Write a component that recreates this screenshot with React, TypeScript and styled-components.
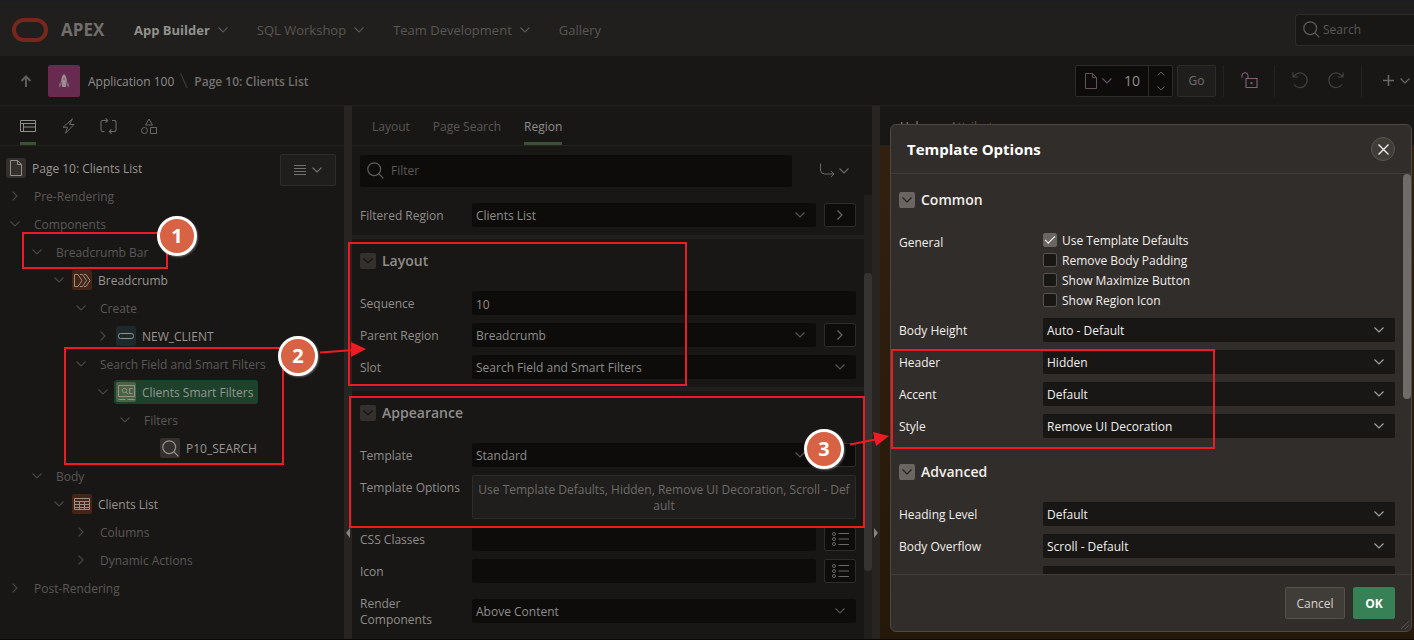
import React from 'react';
import styled, { createGlobalStyle, css } from 'styled-components';

const color = {
  page: '#181715',
  header: '#201f1d',
  line: '#242220',
  splitter: '#272422',
  input: '#0d0c0b',
  button: '#1f1e1c',
  border: '#2e2c2a',
  text: '#8f8d8a',
  muted: '#5b5855',
  dialog: '#312d2a',
  dialogLine: '#403c39',
  dialogInput: '#181715',
  dialogText: '#f1efed',
  red: '#ed1c24',
};

const Global = createGlobalStyle`
  *, *::before, *::after { box-sizing: border-box; }
  body {
    margin: 0;
    background: ${color.page};
    color: ${color.text};
    font: 12px/16px "Open Sans", "Noto Sans", sans-serif;
  }
  button, input, select { font: inherit; color: inherit; margin: 0; }
  button { padding: 0; background: none; border: 0; cursor: pointer; }
  a { color: inherit; text-decoration: none; }
  h1, h2, ul { margin: 0; padding: 0; font: inherit; }
  svg { display: block; flex: none; }
`;

/* ---------- icons ---------- */

type IconProps = { w?: number; h?: number; box?: string; sw?: number; children: React.ReactNode };
const Icon = ({ w = 16, h = w, box = `0 0 ${w} ${h}`, sw = 1, children }: IconProps) => (
  <svg width={w} height={h} viewBox={box} fill="none" stroke="currentColor" strokeWidth={sw} aria-hidden="true">
    {children}
  </svg>
);

const Down = () => <Icon w={10} h={6} sw={1.2}><path d="M.5.5 5 5 9.5.5" /></Icon>;
const Up = () => <Icon w={8} h={5}><path d="M.5 4.5 4 1l3.5 3.5" /></Icon>;
const SmallDown = () => <Icon w={8} h={5}><path d="M.5.5 4 4 7.5.5" /></Icon>;
const Right = () => <Icon w={6} h={10} sw={1.2}><path d="M.5.5 5 5 .5 9.5" /></Icon>;
const Magnifier = () => (
  <Icon w={17} sw={1.2}><circle cx="7.2" cy="7.2" r="6.4" /><path d="m12 12 4.4 4.4" /></Icon>
);
const PageIcon = () => <Icon w={12} h={16}><path d="M.5.5h7l4 4v11H.5zM7.5.5v4h4" /></Icon>;
const ArrowUp = () => <Icon w={12} h={12} sw={2}><path d="M6 12V1.5M1.5 6 6 1.5 10.5 6" /></Icon>;
const Rocket = () => (
  <Icon w={12} h={16}>
    <path d="M6 1C3.8 3 3.2 5.5 3.2 8.5L4.2 14h3.6l1-5.5C8.800 5.500 8.200 3 6 1z" fill="currentColor" stroke="none" />
    <path d="M2.6 8.5 1 11v3.5l2-1.500zM9.400 8.500 11 11v3.500L9 13z" fill="currentColor" stroke="none" opacity=".6" />
    <path d="M4.800 6h2.400" stroke="#672b50" opacity=".6" />
  </Icon>
);
const LayoutIcon = () => <Icon w={16} h={12}><path d="M.5.5h15v11H.5zM.5 3.500h15M3.500 3.500v8M3.500 7h12" /></Icon>;
const Bolt = () => <Icon w={13} h={16}><path d="M10.500.8 1 9.300h4.500L3.500 15.200 12 6.500H7.500z" strokeLinejoin="round" /></Icon>;
const Cycle = () => (
  <Icon w={17} h={16} sw={1.1}>
    <path d="M4.500 13.500H2.500a1.500 1.500 0 0 1-1.500-1.500V4a1.500 1.500 0 0 1 1.500-1.500h5M5.500.3l2.200 2.200-2.200 2.200" />
    <path d="M12 2.500h2.500A1.500 1.500 0 0 1 16 4v8a1.500 1.500 0 0 1-1.500 1.500H9.500M11.500 11.300 9.300 13.500l2.200 2.200" />
  </Icon>
);
const Shapes = () => (
  <Icon w={16} h={16}><path d="M8 1 4.500 7h7zM9.500 9.500h6v6h-6z" /><circle cx="3.500" cy="12.500" r="3" /></Icon>
);
const MenuLines = () => <Icon w={12} h={10}><path d="M0 .5h12M0 3.500h12M0 6.500h12M0 9.500h12" /></Icon>;
const BreadcrumbIcon = () => (
  <Icon w={17} h={13}><path d="M.5.5h3.500l4 6-4 6H.5zM6 .5h2.500l4 6-4 6H6M10 .5h2l4 6-4 6h-2" /></Icon>
);
const ButtonIcon = () => <Icon w={16} h={6}><rect x=".5" y=".5" width="15" height="5" rx="2" /></Icon>;
const FilterIcon = () => (
  <Icon w={17} h={17}>
    <path d="M.5 12.500V1.500h16v11zM.5 15.500h7M9.500 15.500h7M8.200 8.200 10.200 10.200M14.500 4.500h-3v5h3" />
    <circle cx="6.500" cy="6.500" r="2.200" />
  </Icon>
);
const TableIcon = () => <Icon w={16} h={12}><path d="M.5.5h15v11H.5zM.5 3.500h15M.5 6.500h15M.5 9.500h15M5.500 3.500v8M10.500 3.500v8" /></Icon>;
const GoTo = () => <Icon w={15} h={15}><path d="M.5.500v6.500a4 4 0 0 0 4 4H14M10.800 8 14 11l-3.200 3.200" /></Icon>;
const ListIcon = () => (
  <Icon w={17} h={14}>
    <path d="M6.500 1.500H17M6.500 7H17M6.500 12.500H17" /><circle cx="2" cy="2" r="1.500" /><circle cx="2" cy="7" r="1.500" /><circle cx="2" cy="12" r="1.500" />
  </Icon>
);
const Unlock = () => (
  <Icon w={17} h={17} sw={1.1}>
    <path d="M5 6.500h11v9H5zM1 5.500V3.800a3 3 0 0 1 6 0V6.500" />
    <path d="M9.500 10.200h2v2h-2z" fill="currentColor" stroke="none" />
  </Icon>
);
const Undo = () => <Icon w={17} h={17} sw={1.2}><path d="M1 .5v4.500h5M1.500 4.800A7.300 7.300 0 1 1 2 12.500" /></Icon>;
const Redo = () => <Icon w={17} h={17} sw={1.2}><path d="M16 .5v4.500h-5M15.500 4.800A7.300 7.300 0 1 0 15 12.500" /></Icon>;
const Plus = () => <Icon w={11} h={11} sw={1.5}><path d="M5.500 0v11M0 5.500h11" /></Icon>;
const Close = () => <Icon w={11} h={11} sw={1.4}><path d="m.5.5 10 10M10.500.5l-10 10" /></Icon>;
const Grip = () => <Icon w={8} h={8}><path d="M0 8 8 0M4 8l4-4" /></Icon>;
const Slash = () => <Icon w={8} h={15} sw={1.2}><path d="M.5 0 7 15" /></Icon>;
const Logo = () => <Icon w={36} h={24} sw={4}><rect x="2" y="2" width="32" height="20" rx="10" /></Icon>;

/* ---------- shell ---------- */

const Shell = styled.div`
  position: relative;
  display: flex;
  flex-direction: column;
  min-height: 100vh;
  overflow: hidden;
  border-bottom: 1px solid #0a0908;
`;
const Header = styled.header`
  display: flex;
  align-items: center;
  height: 56px;
  padding: 2px 0 0 12px;
  border-top: 1px solid #1a1d24;
  background: ${color.header};
`;
const Brand = styled.a`
  display: flex;
  align-items: center;
  gap: 13px;
  width: 122px;
  font-size: 17px;
  font-weight: 700;
  line-height: 24px;
  color: #716e6c;
  svg { color: #78271d; }
`;
const Nav = styled.nav`
  display: flex;
  flex: 1;
  gap: 29px;
  font-size: 13px;
`;
const NavLink = styled.a<{ $active?: boolean }>`
  display: flex;
  align-items: center;
  gap: 8px;
  color: ${p => (p.$active ? '#93918e' : '#595653')};
  font-weight: ${p => (p.$active ? 700 : 400)};
  svg { color: #595653; }
`;
const HeaderSearch = styled.label`
  display: flex;
  align-items: center;
  gap: 3px;
  width: 119px;
  height: 32px;
  padding-left: 7px;
  border: 1px solid ${color.border};
  border-right: 0;
  border-radius: 4px 0 0 4px;
  background: ${color.page};
  color: #5f5c59;
`;
const BareInput = styled.input`
  flex: 1;
  min-width: 0;
  padding: 1px 0 0;
  border: 0;
  outline: 0;
  background: none;
  &::placeholder { color: ${color.muted}; opacity: 1; }
`;

const Toolbar = styled.div`
  display: flex;
  align-items: center;
  justify-content: space-between;
  height: 50px;
  padding: 0 4px 0 20px;
  border-bottom: 1px solid ${color.line};
`;
const Crumbs = styled.nav`
  display: flex;
  align-items: center;
  > svg { margin: 0 6px; color: #3d3a38; }
`;
const CrumbLink = styled.a`
  padding: 2px 0 0 8px;
`;
const CrumbCurrent = styled.b`
  padding-top: 2px;
  font-weight: 600;
  color: #73706e;
`;
const UpLink = styled.a`
  width: 28px;
  color: #5f5c59;
`;
const AppTile = styled.span`
  display: grid;
  place-items: center;
  width: 32px;
  height: 32px;
  border-radius: 2px;
  background: #672b50;
  color: #9a8d94;
`;
const Tools = styled.div`
  display: flex;
  align-items: center;
  height: 32px;
`;
const PageSelector = styled.div`
  display: flex;
  align-items: center;
  width: 98px;
  height: 32px;
  margin-right: 4px;
  border: 1px solid ${color.border};
  border-radius: 2px;
  background: ${color.input};
  font-size: 14px;
`;
const PageMenu = styled.button`
  display: flex;
  align-items: center;
  gap: 5px;
  padding-left: 9px;
  color: #66525f;
`;
const Spinner = styled.div`
  display: flex;
  flex-direction: column;
  align-items: center;
  justify-content: space-around;
  width: 24px;
  height: 30px;
  border-left: 1px solid ${color.border};
  color: #5f5c59;
  button { display: flex; }
`;
const NumberInput = styled(BareInput)`
  text-align: right;
  padding-right: 8px;
`;
const PlainButton = styled.button<{ $w: number }>`
  display: flex;
  align-items: center;
  justify-content: center;
  gap: 6px;
  width: ${p => p.$w}px;
  height: 32px;
  border: 1px solid ${color.border};
  border-radius: 2px;
  background: ${color.button};
  color: #73706d;
`;
const ToolGroup = styled.div<{ $w: number }>`
  display: flex;
  align-items: center;
  justify-content: center;
  gap: 18px;
  width: ${p => p.$w}px;
  height: 32px;
  border-left: 1px solid ${color.line};
  color: #454240;
  button + & { margin-left: 7px; }
`;
const ToolButton = styled.button<{ $tint?: string; $gap?: number }>`
  display: flex;
  align-items: center;
  gap: ${p => p.$gap ?? 4}px;
  color: ${p => p.$tint ?? 'inherit'};
`;
const CreateGroup = styled(ToolGroup)`
  justify-content: flex-end;
`;

const Workspace = styled.main`
  flex: 1;
  display: grid;
  grid-template-columns: 344px 8px minmax(0, 520px) 8px minmax(0, 1fr);
`;
const Splitter = styled.div<{ $dir: 'left' | 'right' }>`
  display: flex;
  justify-content: center;
  padding-top: 422px;
  background: ${color.splitter};
  &::after {
    content: '';
    height: 10px;
    border: 5px solid transparent;
    border-width: 5px 4px;
    border-${p => (p.$dir === 'left' ? 'right' : 'left')}-color: #85827f;
    border-${p => p.$dir}-width: 0;
  }
`;
const Panel = styled.section`
  display: flex;
  flex-direction: column;
  min-width: 0;
`;
const Tabs = styled.div<{ $gap: number }>`
  display: flex;
  gap: ${p => p.$gap}px;
  height: 40px;
  padding-left: 20px;
  border-bottom: 1px solid ${color.line};
`;
const Tab = styled.button<{ $on?: boolean; $icon?: boolean }>`
  display: flex;
  align-items: center;
  justify-content: center;
  min-width: 16px;
  padding-top: ${p => (p.$icon ? 3 : 5)}px;
  border-bottom: 3px solid ${p => (p.$on ? '#3a5134' : 'transparent')};
  color: ${p => (p.$on ? color.text : p.$icon ? '#6b6865' : color.muted)};
`;

/* ---------- tree ---------- */

const TreeArea = styled.div`
  display: flex;
  align-items: flex-start;
  padding: 8px 8px 0 0;
`;
const Tree = styled.ul`
  flex: 1;
  list-style: none;
`;
const TreeRow = styled.li<{ $level: number }>`
  display: flex;
  align-items: center;
  height: 28px;
  padding-left: ${p => p.$level * 22}px;
`;
const Toggle = styled.button`
  display: flex;
  justify-content: center;
  width: 30px;
  color: #484542;
`;
const Node = styled.span<{ $selected?: boolean; $icon?: boolean; $root?: boolean }>`
  display: flex;
  align-items: center;
  gap: 6px;
  height: 24px;
  color: ${p => (p.$icon ? '#989592' : color.muted)};
  margin-left: ${p => (p.$root ? 6 : p.$icon ? -4 : 2)}px;
  padding: 0 5px 0 ${p => (p.$root ? 0 : 2)}px;
  border-radius: 3px;
  background: ${p => (p.$selected ? '#1d412b' : 'none')};
`;
const NodeText = styled.span`
  padding-top: 2px;
`;
const NodeIcon = styled.span<{ $bg: string }>`
  display: grid;
  place-items: center;
  width: 20px;
  height: 20px;
  border-radius: 2px;
  background: ${p => p.$bg};
  color: #989088;
`;

type TreeItem = { level: number; label: string; open?: boolean; icon?: React.ReactNode; bg?: string; selected?: boolean };
const treeItems: TreeItem[] = [
  { level: 0, label: 'Pre-Rendering', open: false },
  { level: 0, label: 'Components', open: true },
  { level: 1, label: 'Breadcrumb Bar', open: true },
  { level: 2, label: 'Breadcrumb', open: true, icon: <BreadcrumbIcon />, bg: '#442414' },
  { level: 3, label: 'Create', open: true },
  { level: 4, label: 'NEW_CLIENT', open: false, icon: <ButtonIcon />, bg: '#1c292d' },
  { level: 3, label: 'Search Field and Smart Filters', open: true },
  { level: 4, label: 'Clients Smart Filters', open: true, icon: <FilterIcon />, bg: '#4b6344', selected: true },
  { level: 5, label: 'Filters', open: true },
  { level: 6, label: 'P10_SEARCH', icon: <Magnifier />, bg: '#33302e' },
  { level: 1, label: 'Body', open: true },
  { level: 2, label: 'Clients List', open: true, icon: <TableIcon />, bg: '#442414' },
  { level: 3, label: 'Columns', open: false },
  { level: 3, label: 'Dynamic Actions', open: false },
  { level: 0, label: 'Post-Rendering', open: false },
];

/* ---------- property editor ---------- */

const FilterRow = styled.div`
  display: flex;
  align-items: center;
  height: 49px;
  padding: 0 23px 0 8px;
`;
const FilterBox = styled.label`
  display: flex;
  align-items: center;
  gap: 7px;
  flex: 1;
  height: 32px;
  margin-right: 28px;
  padding-left: 7px;
  border-radius: 2px;
  background: ${color.input};
  color: #5f5c59;
`;
const ScrollBody = styled.div`
  flex: 1;
  display: flex;
`;
const Properties = styled.div`
  flex: 1;
  min-width: 0;
`;
const Track = styled.div`
  width: 8px;
  padding-top: 78px;
  background: #201f1d;
`;
const Thumb = styled.div<{ $h: number; $color: string }>`
  width: 8px;
  height: ${p => p.$h}px;
  border-radius: 4px;
  background: ${p => p.$color};
`;
const Group = styled.section<{ $dialog?: boolean }>`
  border-top: 4px solid ${p => (p.$dialog ? 'transparent' : '#201f1d')};
`;
const GroupTitle = styled.h2<{ $dialog?: boolean }>`
  display: flex;
  align-items: center;
  gap: 6px;
  height: 44px;
  padding-left: 8px;
  font-size: 14px;
  font-weight: 600;
  button {
    display: grid;
    place-items: center;
    width: 16px;
    height: 16px;
    border-radius: 2px;
    background: ${p => (p.$dialog ? '#6b6561' : '#33302e')};
    color: ${p => (p.$dialog ? '#24211f' : '#141311')};
  }
`;
const Rows = styled.div`
  display: grid;
  gap: 8px;
  padding: 8px;
`;
const Row = styled.div<{ $dialog?: boolean; $center?: boolean }>`
  display: grid;
  grid-template-columns: ${p => (p.$dialog ? 144 : 112)}px minmax(0, 1fr) auto;
  align-items: ${p => (p.$center ? 'center' : 'start')};
  > label, > span { padding: 5px 0 3px; }
`;
const fieldBox = css`
  width: 100%;
  height: 24px;
  padding: 2px 4px 0;
  border: 0;
  outline: 0;
  border-radius: 2px;
`;
const SelectWrap = styled.div<{ $dialog?: boolean }>`
  display: grid;
  align-items: center;
  select {
    ${fieldBox}
    grid-area: 1 / 1;
    appearance: none;
    background: ${p => (p.$dialog ? color.dialogInput : color.input)};
  }
  svg {
    grid-area: 1 / 1;
    justify-self: end;
    margin-right: 11px;
    color: ${p => (p.$dialog ? '#a5a19e' : '#56534f')};
    pointer-events: none;
  }
`;
const TextField = styled.input`
  ${fieldBox}
  background: ${color.input};
`;
const SideButton = styled.button`
  display: grid;
  place-items: center;
  width: 32px;
  height: 24px;
  margin-left: 8px;
  border: 1px solid ${color.border};
  border-radius: 2px;
  background: ${color.input};
  color: #6b6866;
`;
const OptionsButton = styled.button`
  height: 44px;
  padding: 2px 4px 0;
  border: 1px solid ${color.border};
  border-radius: 2px;
  background: ${color.button};
  color: #6e6b69;
  word-break: break-all;
`;

type FieldProps = { id: string; label: string; value: string; dialog?: boolean; side?: React.ReactNode; center?: boolean };
const SelectField = ({ id, label, value, dialog, side, center }: FieldProps) => (
  <Row $dialog={dialog} $center={center}>
    <label htmlFor={id}>{label}</label>
    <SelectWrap $dialog={dialog}>
      <select id={id} defaultValue={value}><option>{value}</option></select>
      <Down />
    </SelectWrap>
    {side}
  </Row>
);
const Goto = () => <SideButton aria-label="Go to"><Right /></SideButton>;
const Pick = () => <SideButton aria-label="Pick from list"><ListIcon /></SideButton>;

/* ---------- right side & dialog ---------- */

const Canvas = styled.div`
  flex: 1;
  background: linear-gradient(#32200f, #251809);
`;
const Dialog = styled.div`
  position: absolute;
  top: 124px;
  right: 2px;
  width: 522px;
  height: 508px;
  display: flex;
  flex-direction: column;
  border: 1px solid #4d4844;
  border-radius: 6px;
  background: ${color.dialog};
  color: ${color.dialogText};
`;
const DialogHeader = styled.div`
  display: flex;
  align-items: center;
  justify-content: space-between;
  height: 49px;
  padding: 0 16px;
  border-bottom: 1px solid ${color.dialogLine};
  h1 { font-size: 15px; line-height: 24px; font-weight: 700; color: #fff; }
  button {
    display: grid;
    place-items: center;
    width: 24px;
    height: 24px;
    border: 1px solid #5a5550;
    border-radius: 12px;
    background: #403c38;
  }
`;
const DialogBody = styled.div`
  flex: 1;
  min-height: 0;
  display: flex;
  overflow: hidden;
`;
const DialogFooter = styled.div`
  display: flex;
  align-items: center;
  justify-content: flex-end;
  gap: 8px;
  height: 57px;
  padding-right: 16px;
  border-top: 1px solid ${color.dialogLine};
`;
const DialogButton = styled.button<{ $hot?: boolean }>`
  width: ${p => (p.$hot ? 42 : 60)}px;
  height: 32px;
  padding-top: 2px;
  border: 1px solid ${p => (p.$hot ? '#388056' : '#55504c')};
  border-radius: 2px;
  background: ${p => (p.$hot ? '#388056' : '#403c38')};
  color: ${p => (p.$hot ? '#fff' : '#d6d3d0')};
  font-weight: ${p => (p.$hot ? 700 : 400)};
`;
const Resize = styled.span`
  position: absolute;
  right: 2px;
  bottom: 2px;
  color: #5a5550;
`;
const CheckLabel = styled.label`
  display: flex;
  align-items: center;
  gap: 5px;
  height: 20px;
  span { padding-top: 2px; }
`;
const CheckBox = styled.input`
  appearance: none;
  display: grid;
  place-items: center;
  width: 14px;
  height: 14px;
  border: 1px solid #57524e;
  border-radius: 2px;
  background: ${color.dialogInput};
  &:checked { background: #6b6561; border-color: #6b6561; }
  &:checked::after {
    content: '';
    width: 10px;
    height: 5px;
    margin-top: -3px;
    border: solid #fff;
    border-width: 0 0 1px 1px;
    transform: rotate(-45deg);
  }
`;
const checks = [
  { label: 'Use Template Defaults', on: true },
  { label: 'Remove Body Padding', on: false },
  { label: 'Show Maximize Button', on: false },
  { label: 'Show Region Icon', on: false },
];

/* ---------- annotations ---------- */

const Frame = styled.div<{ $x: number; $y: number; $w: number; $h: number }>`
  position: absolute;
  left: ${p => p.$x}px;
  top: ${p => p.$y}px;
  width: ${p => p.$w}px;
  height: ${p => p.$h}px;
  border: 2px solid ${color.red};
  pointer-events: none;
`;
const Badge = styled.div<{ $x: number; $y: number }>`
  position: absolute;
  left: ${p => p.$x - 20}px;
  top: ${p => p.$y - 20}px;
  display: grid;
  place-items: center;
  width: 40px;
  height: 40px;
  border: 3px solid #fff;
  border-radius: 20px;
  background: #d86344;
  box-shadow: 1px 1px 2px rgba(255, 255, 255, 0.35);
  color: #fff;
  font: 700 20px/24px "Open Sans", sans-serif;
`;
const Arrow = styled.svg<{ $x: number; $y: number }>`
  position: absolute;
  left: ${p => p.$x}px;
  top: ${p => p.$y}px;
  fill: ${color.red};
  stroke: ${color.red};
`;

export default function App() {
  return (
    <Shell>
      <Global />
      <Header>
        <Brand href="#"><Logo />APEX</Brand>
        <Nav>
          <NavLink href="#" $active>App Builder<Down /></NavLink>
          <NavLink href="#">SQL Workshop<Down /></NavLink>
          <NavLink href="#">Team Development<Down /></NavLink>
          <NavLink href="#">Gallery</NavLink>
        </Nav>
        <HeaderSearch><Magnifier /><BareInput aria-label="Search" placeholder="Search" /></HeaderSearch>
      </Header>

      <Toolbar>
        <Crumbs>
          <UpLink href="#" aria-label="Up"><ArrowUp /></UpLink>
          <AppTile><Rocket /></AppTile>
          <CrumbLink href="#">Application 100</CrumbLink>
          <Slash />
          <CrumbCurrent>Page 10: Clients List</CrumbCurrent>
        </Crumbs>
        <Tools>
          <PageSelector>
            <PageMenu aria-label="Pages"><PageIcon /><Down /></PageMenu>
            <NumberInput aria-label="Page number" defaultValue="10" />
            <Spinner>
              <button aria-label="Next page"><Up /></button>
              <button aria-label="Previous page"><SmallDown /></button>
            </Spinner>
          </PageSelector>
          <PlainButton $w={39}>Go</PlainButton>
          <ToolGroup $w={51}>
            <ToolButton $tint="#85607e" aria-label="Unlock"><Unlock /></ToolButton>
          </ToolGroup>
          <ToolGroup $w={87}>
            <ToolButton aria-label="Undo"><Undo /></ToolButton>
            <ToolButton aria-label="Redo"><Redo /></ToolButton>
          </ToolGroup>
          <CreateGroup $w={49}>
            <ToolButton $tint="#6b6866" $gap={6} aria-label="Create"><Plus /><Down /></ToolButton>
          </CreateGroup>
        </Tools>
      </Toolbar>

      <Workspace>
        <Panel>
          <Tabs $gap={24}>
            <Tab $icon $on aria-label="Rendering"><LayoutIcon /></Tab>
            <Tab $icon aria-label="Dynamic Actions"><Bolt /></Tab>
            <Tab $icon aria-label="Processing"><Cycle /></Tab>
            <Tab $icon aria-label="Shared Components"><Shapes /></Tab>
          </Tabs>
          <TreeArea>
            <Tree>
              <TreeRow $level={0}>
                <Node $icon $root>
                  <NodeIcon $bg="#33302e"><PageIcon /></NodeIcon>
                  <NodeText>Page 10: Clients List</NodeText>
                </Node>
              </TreeRow>
              {treeItems.map(t => (
                <TreeRow key={t.label} $level={t.level}>
                  <Toggle aria-label={`Toggle ${t.label}`}>{t.open === undefined ? null : t.open ? <Down /> : <Right />}</Toggle>
                  <Node $selected={t.selected} $icon={!!t.icon}>
                    {t.icon && <NodeIcon $bg={t.bg!}>{t.icon}</NodeIcon>}
                    <NodeText>{t.label}</NodeText>
                  </Node>
                </TreeRow>
              ))}
            </Tree>
            <PlainButton $w={56} aria-label="Menu"><MenuLines /><Down /></PlainButton>
          </TreeArea>
        </Panel>

        <Splitter $dir="left" />

        <Panel>
          <Tabs $gap={23}>
            <Tab>Layout</Tab>
            <Tab>Page Search</Tab>
            <Tab $on>Region</Tab>
          </Tabs>
          <FilterRow>
            <FilterBox><Magnifier /><BareInput aria-label="Filter" placeholder="Filter" /></FilterBox>
            <ToolButton $tint="#6b6866" aria-label="Go to group"><GoTo /><Down /></ToolButton>
          </FilterRow>
          <ScrollBody>
            <Properties>
              <Rows>
                <SelectField id="filtered" label="Filtered Region" value="Clients List" side={<Goto />} />
              </Rows>
              <Group>
                <GroupTitle><button aria-label="Collapse Layout"><Down /></button>Layout</GroupTitle>
                <Rows>
                  <Row><label htmlFor="seq">Sequence</label><TextField id="seq" defaultValue="10" /></Row>
                  <SelectField id="parent" label="Parent Region" value="Breadcrumb" side={<Goto />} />
                  <SelectField id="slot" label="Slot" value="Search Field and Smart Filters" />
                </Rows>
              </Group>
              <Group>
                <GroupTitle><button aria-label="Collapse Appearance"><Down /></button>Appearance</GroupTitle>
                <Rows>
                  <SelectField id="template" label="Template" value="Standard" side={<Goto />} />
                  <Row>
                    <label htmlFor="options">Template Options</label>
                    <OptionsButton id="options">Use Template Defaults, Hidden, Remove UI Decoration, Scroll - Default</OptionsButton>
                  </Row>
                  <Row><label htmlFor="css">CSS Classes</label><TextField id="css" /><Pick /></Row>
                  <Row><label htmlFor="icon">Icon</label><TextField id="icon" /><Pick /></Row>
                  <SelectField id="render" label="Render Components" value="Above Content" center />
                </Rows>
              </Group>
            </Properties>
            <Track><Thumb $h={298} $color="#363433" /></Track>
          </ScrollBody>
        </Panel>

        <Splitter $dir="right" />

        <Panel>
          <Tabs $gap={24}>
            <Tab $on>Help</Tab>
            <Tab>Attributes</Tab>
          </Tabs>
          <Canvas />
        </Panel>
      </Workspace>

      <Dialog role="dialog" aria-label="Template Options">
        <DialogHeader>
          <h1>Template Options</h1>
          <button aria-label="Close"><Close /></button>
        </DialogHeader>
        <DialogBody>
          <Properties>
            <Group $dialog>
              <GroupTitle $dialog><button aria-label="Collapse Common"><Down /></button>Common</GroupTitle>
              <Rows>
                <Row $dialog>
                  <span>General</span>
                  <div>
                    {checks.map(c => (
                      <CheckLabel key={c.label}>
                        <CheckBox type="checkbox" defaultChecked={c.on} />
                        <span>{c.label}</span>
                      </CheckLabel>
                    ))}
                  </div>
                </Row>
                <SelectField dialog id="height" label="Body Height" value="Auto - Default" />
                <SelectField dialog id="header" label="Header" value="Hidden" />
                <SelectField dialog id="accent" label="Accent" value="Default" />
                <SelectField dialog id="style" label="Style" value="Remove UI Decoration" />
              </Rows>
            </Group>
            <Group $dialog>
              <GroupTitle $dialog><button aria-label="Collapse Advanced"><Down /></button>Advanced</GroupTitle>
              <Rows>
                <SelectField dialog id="level" label="Heading Level" value="Default" />
                <SelectField dialog id="overflow" label="Body Overflow" value="Scroll - Default" />
                <SelectField dialog id="more" label="" value="" />
              </Rows>
            </Group>
          </Properties>
          <Thumb $h={225} $color="#6f6b68" />
        </DialogBody>
        <DialogFooter>
          <DialogButton>Cancel</DialogButton>
          <DialogButton $hot>OK</DialogButton>
        </DialogFooter>
        <Resize><Grip /></Resize>
      </Dialog>

      <Frame $x={22} $y={232} $w={146} $h={37} />
      <Frame $x={64} $y={347} $w={220} $h={118} />
      <Frame $x={348} $y={242} $w={339} $h={144} />
      <Frame $x={349} $y={396} $w={516} $h={132} />
      <Frame $x={891} $y={349} $w={324} $h={100} />
      <Arrow $x={320} $y={341} width="48" height="18" aria-hidden="true">
        <path d="M0 11.500 34 9" strokeWidth="2" /><path d="M31 1v15l15-8z" stroke="none" />
      </Arrow>
      <Arrow $x={850} $y={430} width="42" height="18" aria-hidden="true">
        <path d="M0 14.500 28 9" strokeWidth="2" /><path d="m23 2 3 14 13-10z" stroke="none" />
      </Arrow>
      <Badge $x={177} $y={236}>1</Badge>
      <Badge $x={298} $y={356}>2</Badge>
      <Badge $x={824} $y={449}>3</Badge>
    </Shell>
  );
}
